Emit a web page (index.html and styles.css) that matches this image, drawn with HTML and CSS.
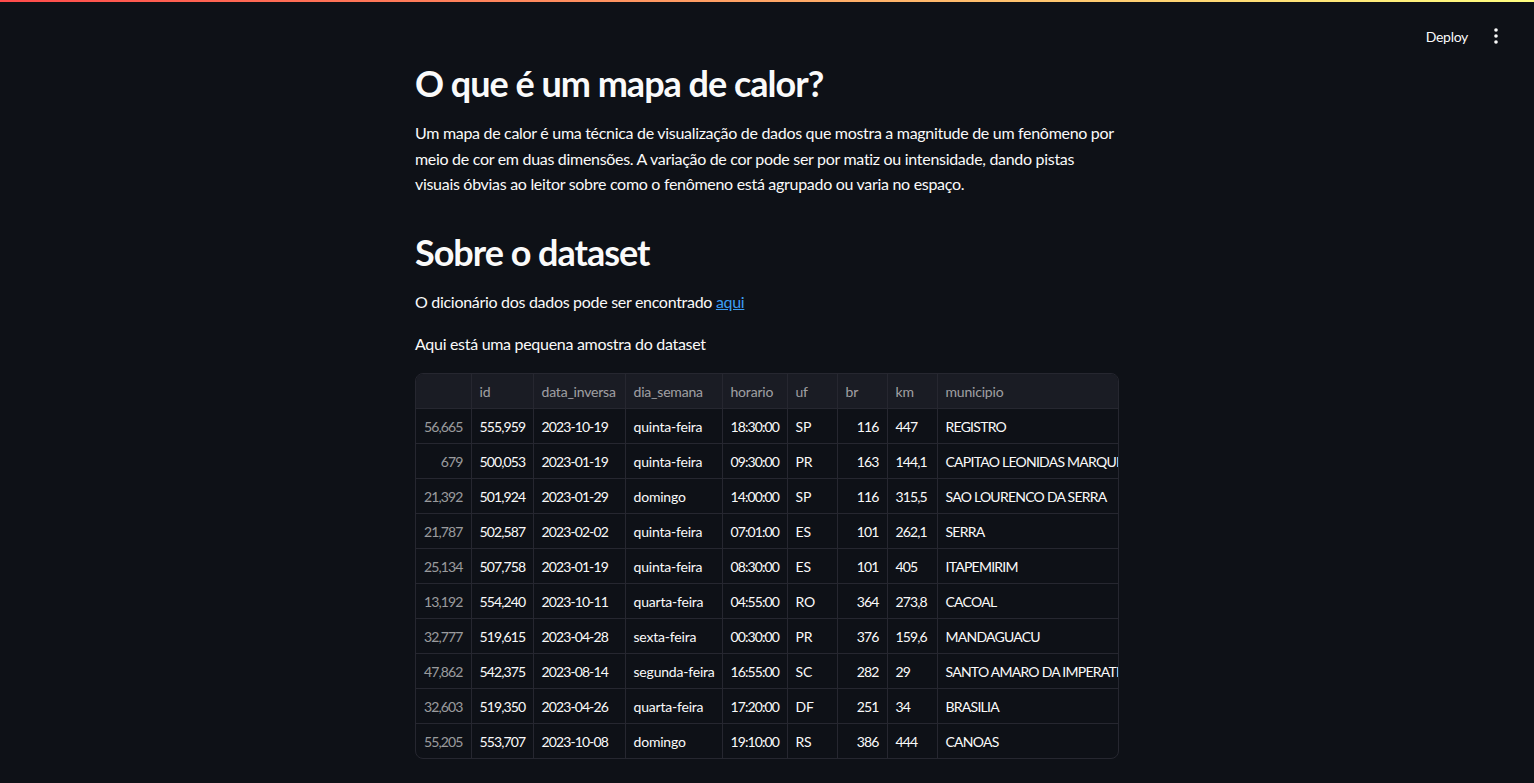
FILE: index.html
```html
<!DOCTYPE html>
<html lang="pt">
<head>
<meta charset="utf-8">
<title>Mapa de calor</title>
<link rel="stylesheet" href="styles.css">
</head>
<body>
<div class="decoration"></div>
<header class="toolbar">
  <span class="deploy">Deploy</span>
  <span class="kebab">
    <svg width="4" height="16" viewBox="0 0 4 16"><circle cx="2" cy="2" r="1.8" fill="#fafafa"/><circle cx="2" cy="8" r="1.8" fill="#fafafa"/><circle cx="2" cy="14" r="1.8" fill="#fafafa"/></svg>
  </span>
</header>
<main class="main">
  <h2 class="title">O que é um mapa de calor?</h2>
  <p class="text">Um mapa de calor é uma técnica de visualização de dados que mostra a magnitude de um fenômeno por meio de cor em duas dimensões. A variação de cor pode ser por matiz ou intensidade, dando pistas visuais óbvias ao leitor sobre como o fenômeno está agrupado ou varia no espaço.</p>
  <h2 class="title title-second">Sobre o dataset</h2>
  <p class="text">O dicionário dos dados pode ser encontrado <a href="#" class="link">aqui</a></p>
  <p class="text text-gap">Aqui está uma pequena amostra do dataset</p>
  <div class="grid-wrap">
    <table class="grid">
      <colgroup>
        <col class="c-idx"><col class="c-id"><col class="c-data"><col class="c-dia"><col class="c-hor"><col class="c-uf"><col class="c-br"><col class="c-km"><col class="c-mun">
      </colgroup>
      <thead>
        <tr><th></th><th>id</th><th>data_inversa</th><th>dia_semana</th><th>horario</th><th>uf</th><th>br</th><th>km</th><th>municipio</th></tr>
      </thead>
      <tbody>
        <tr><td class="idx n">56,665</td><td class="n">555,959</td><td class="n">2023-10-19</td><td>quinta-feira</td><td class="n">18:30:00</td><td>SP</td><td class="num n">116</td><td class="n">447</td><td class="mun">REGISTRO</td></tr>
        <tr><td class="idx n">679</td><td class="n">500,053</td><td class="n">2023-01-19</td><td>quinta-feira</td><td class="n">09:30:00</td><td>PR</td><td class="num n">163</td><td class="n">144,1</td><td class="mun">CAPITAO LEONIDAS MARQUES</td></tr>
        <tr><td class="idx n">21,392</td><td class="n">501,924</td><td class="n">2023-01-29</td><td>domingo</td><td class="n">14:00:00</td><td>SP</td><td class="num n">116</td><td class="n">315,5</td><td class="mun">SAO LOURENCO DA SERRA</td></tr>
        <tr><td class="idx n">21,787</td><td class="n">502,587</td><td class="n">2023-02-02</td><td>quinta-feira</td><td class="n">07:01:00</td><td>ES</td><td class="num n">101</td><td class="n">262,1</td><td class="mun">SERRA</td></tr>
        <tr><td class="idx n">25,134</td><td class="n">507,758</td><td class="n">2023-01-19</td><td>quinta-feira</td><td class="n">08:30:00</td><td>ES</td><td class="num n">101</td><td class="n">405</td><td class="mun">ITAPEMIRIM</td></tr>
        <tr><td class="idx n">13,192</td><td class="n">554,240</td><td class="n">2023-10-11</td><td>quarta-feira</td><td class="n">04:55:00</td><td>RO</td><td class="num n">364</td><td class="n">273,8</td><td class="mun">CACOAL</td></tr>
        <tr><td class="idx n">32,777</td><td class="n">519,615</td><td class="n">2023-04-28</td><td>sexta-feira</td><td class="n">00:30:00</td><td>PR</td><td class="num n">376</td><td class="n">159,6</td><td class="mun">MANDAGUACU</td></tr>
        <tr><td class="idx n">47,862</td><td class="n">542,375</td><td class="n">2023-08-14</td><td>segunda-feira</td><td class="n">16:55:00</td><td>SC</td><td class="num n">282</td><td class="n">29</td><td class="mun">SANTO AMARO DA IMPERATRIZ</td></tr>
        <tr><td class="idx n">32,603</td><td class="n">519,350</td><td class="n">2023-04-26</td><td>quarta-feira</td><td class="n">17:20:00</td><td>DF</td><td class="num n">251</td><td class="n">34</td><td class="mun">BRASILIA</td></tr>
        <tr><td class="idx n">55,205</td><td class="n">553,707</td><td class="n">2023-10-08</td><td>domingo</td><td class="n">19:10:00</td><td>RS</td><td class="num n">386</td><td class="n">444</td><td class="mun">CANOAS</td></tr>
      </tbody>
    </table>
  </div>
</main>
</body>
</html>
```

FILE: styles.css
```css
html, body {
  margin: 0;
  padding: 0;
  background: #0e1117;
  color: #fafafa;
  font-family: "Lato", "Noto Sans", sans-serif;
}

.decoration {
  height: 2px;
  background: linear-gradient(90deg, #ff4b4b, #ffff80);
}

.toolbar {
  position: absolute;
  top: 2px;
  right: 0;
  height: 68px;
  display: flex;
  align-items: center;
  gap: 26px;
  padding-right: 36px;
}

.deploy {
  font-size: 14px;
  letter-spacing: -0.3px;
  color: #fafafa;
}

.kebab {
  display: flex;
  align-items: center;
}

.main {
  width: 704px;
  margin: 0 auto;
  padding-top: 60px;
  padding-bottom: 40px;
}

.title {
  margin: 0;
  font-size: 36px;
  font-weight: 700;
  line-height: 1.2;
  letter-spacing: -1px;
}

.title-second {
  margin-top: 34px;
}

.text {
  margin: 15px 0 0;
  font-size: 16px;
  line-height: 1.6;
  letter-spacing: -0.3px;
}

.text-gap {
  margin-top: 16px;
}

.link {
  color: #3d9df3;
  text-decoration: underline;
}

.grid-wrap {
  margin-top: 17px;
  border: 1px solid #262730;
  border-radius: 8px;
  overflow: hidden;
}

.grid {
  width: 100%;
  table-layout: fixed;
  border-collapse: collapse;
  font-size: 14px;
  letter-spacing: -0.2px;
}

.c-idx { width: 55px; }
.c-id { width: 62px; }
.c-data { width: 92px; }
.c-dia { width: 97px; }
.c-hor { width: 65px; }
.c-uf { width: 50px; }
.c-br { width: 50px; }
.c-km { width: 50px; }

.grid th, .grid td {
  height: 34px;
  padding: 0 8px;
  white-space: nowrap;
  overflow: hidden;
  text-overflow: clip;
  text-align: left;
  border-right: 1px solid #262730;
  border-bottom: 1px solid #262730;
}

.grid th:last-child, .grid td:last-child {
  border-right: none;
}

.grid tbody tr:last-child td {
  border-bottom: none;
}

.grid th {
  height: 34px;
  background: #1a1c24;
  color: rgba(250, 250, 250, 0.6);
  font-weight: 400;
}

.grid td {
  color: #fafafa;
}

.grid td.n {
  letter-spacing: -0.9px;
}

.grid td.mun {
  letter-spacing: -0.75px;
}

.grid td.idx {
  text-align: right;
  color: rgba(250, 250, 250, 0.6);
}

.grid td.num {
  text-align: right;
}
```
